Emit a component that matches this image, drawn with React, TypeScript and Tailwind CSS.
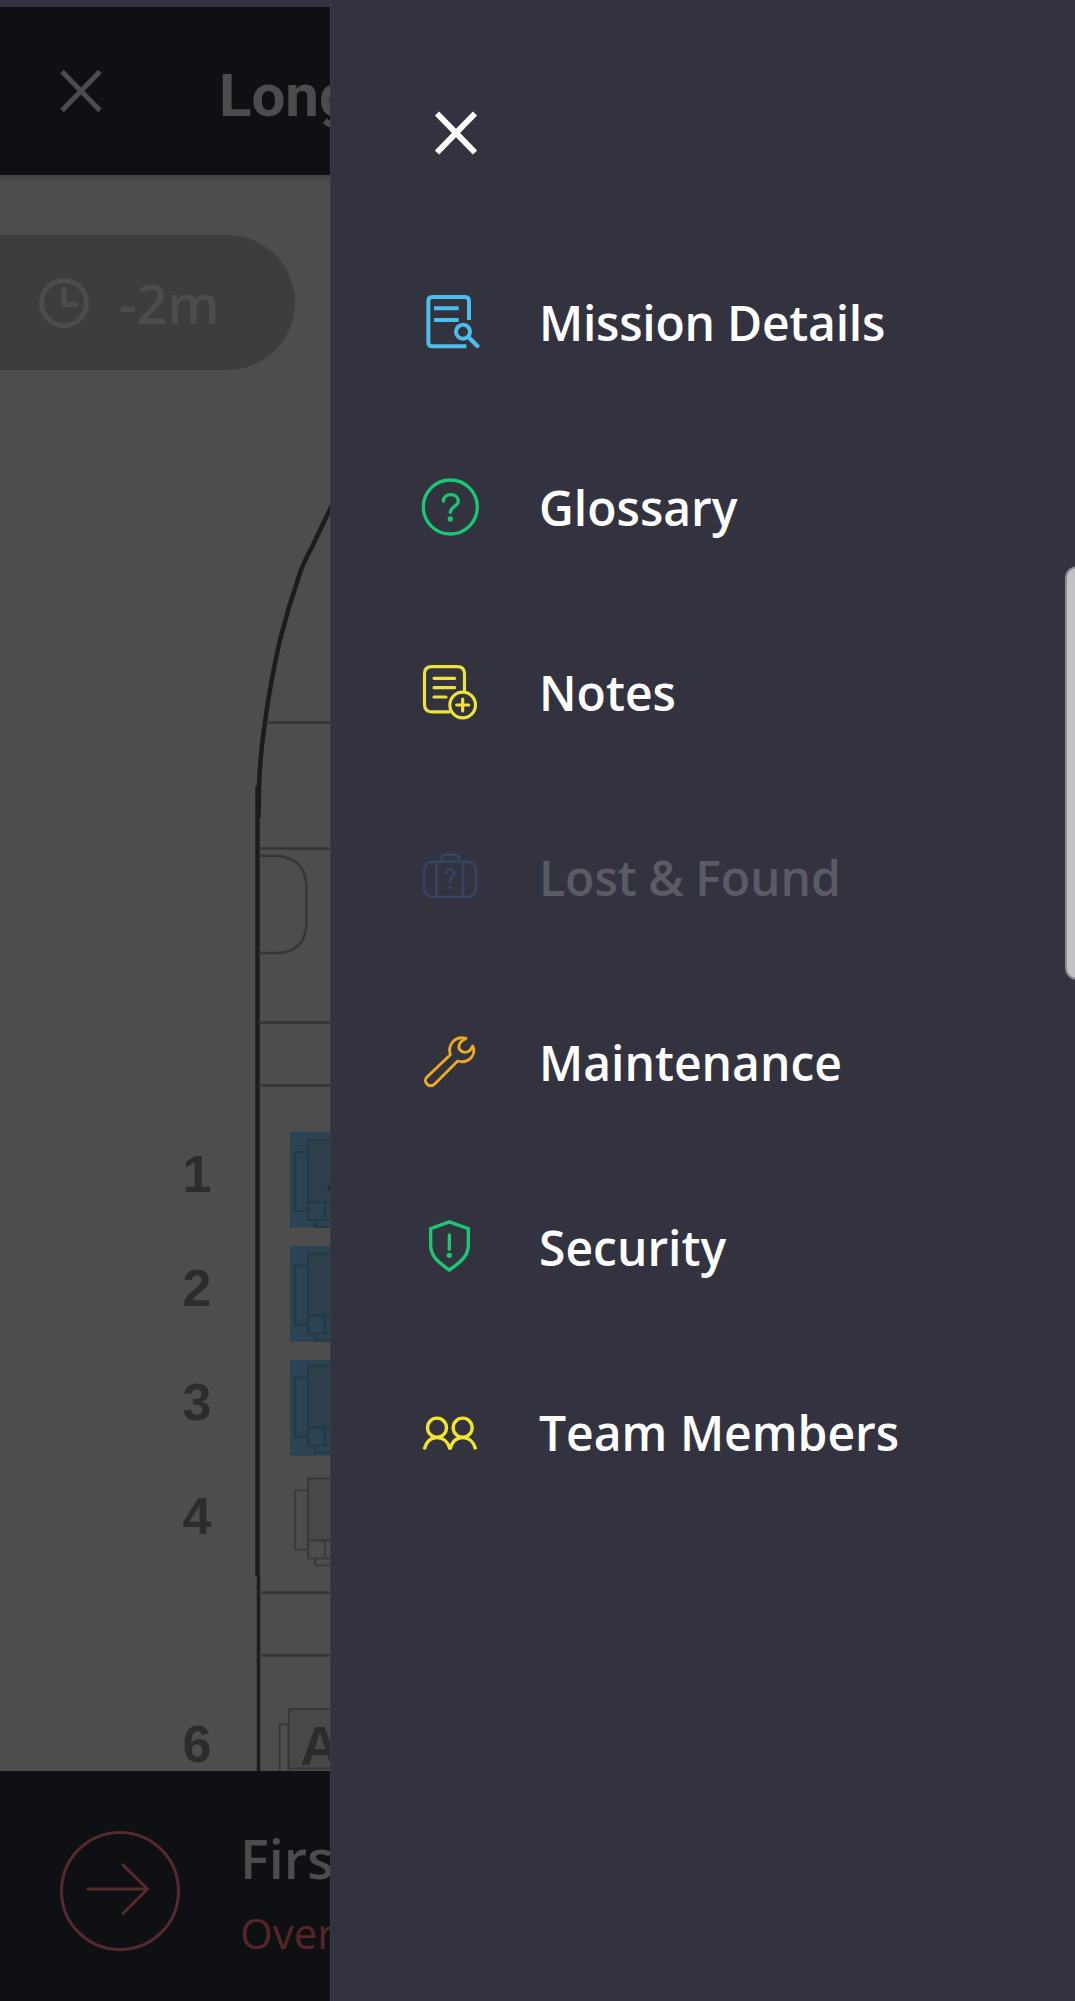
import type { ReactNode } from "react";

type MenuItem = {
  label: string;
  color: string;
  spacing?: string;
  disabled?: boolean;
  icon: ReactNode;
};

const menu: MenuItem[] = [
  {
    label: "Mission Details",
    color: "text-[#4cbdec]",
    spacing: "tracking-[-0.25px]",
    icon: (
      <g strokeWidth="12">
        <path d="M147 84V27q0-12-12-12H37q-12 0-12 12V151q0 12 12 12H139" />
        <path d="M42 49H116M42 84H116" />
        <circle cx="129" cy="119" r="21" />
        <path d="M146 136L172 162" strokeWidth="13" strokeLinecap="round" />
      </g>
    ),
  },
  {
    label: "Glossary",
    color: "text-[#18c974]",
    icon: (
      <g strokeWidth="10" strokeLinecap="round">
        <circle cx="91" cy="90" r="81" />
        <path d="M70 72C71 60 80 53 92 53C105 53 115 61 115 73C115 88 91 88 91 106" />
        <circle cx="91" cy="126" r="8" fill="currentColor" stroke="none" />
      </g>
    ),
  },
  {
    label: "Notes",
    color: "text-[#efe23c]",
    icon: (
      <g strokeWidth="9.5" strokeLinecap="round">
        <path d="M133.500 84V36q0-22-22-22H35.500q-22 0-22 22V127.500q0 22 22 22H88" />
        <path d="M42 49H104M42 77H104M42 105H78" />
        <circle cx="128" cy="129" r="38.500" />
        <path d="M110 129H146M128 111V147" />
      </g>
    ),
  },
  {
    label: "Lost & Found",
    color: "text-[#364463]",
    spacing: "[word-spacing:-1px]",
    disabled: true,
    icon: (
      <g strokeWidth="8" strokeLinecap="round">
        <rect x="12" y="44" width="156" height="106" rx="26" />
        <path d="M49 44V150M129 44V150M65 42V36q0-13 13-13h26q13 0 13 13v6" />
        <path d="M78 78C79 71 84 68 90 68C97 68 102 73 102 79C102 90 90 90 90 105" />
        <circle cx="90" cy="122" r="5" fill="currentColor" stroke="none" />
      </g>
    ),
  },
  {
    label: "Maintenance",
    color: "text-[#f0aa22]",
    icon: (
      <path
        strokeWidth="8.5"
        strokeLinejoin="round"
        d="M91 68C82 40 104 10 138 19C120 27 111 43 120 54C131 67 151 61 158 42C170 66 148 97 113 87L45 155C38 162 29 163 22 157C14 150 14 142 21 135Z"
      />
    ),
  },
  {
    label: "Security",
    color: "text-[#1cc777]",
    icon: (
      <g strokeWidth="10" strokeLinecap="round">
        <path d="M88 14.500L145 35V85C145 115 126 133 88 159C50 133 32 115 32 85V35Z" />
        <path d="M88 54V97" />
        <circle cx="88" cy="115" r="8" fill="currentColor" stroke="none" />
      </g>
    ),
  },
  {
    label: "Team Members",
    color: "text-[#f2e52c]",
    icon: (
      <g strokeWidth="10">
        <circle cx="51" cy="77" r="28.500" />
        <circle cx="128" cy="77" r="28.500" />
        <path
          strokeLinejoin="bevel"
          d="M13 142C19 118 34 107 51 107S84 118 90 142C96 118 111 107 128 107S161 118 167 142"
        />
      </g>
    ),
  },
];

function Cross({ className, width }: { className: string; width: number }) {
  return (
    <svg className={className} viewBox="0 0 44 44" fill="none" stroke="currentColor" strokeWidth={width}>
      <path d="M3 2.500L41 41.500M41 2.500L3 41.500" />
    </svg>
  );
}

/* Seat outline; y is the top of the backrest. */
function Seat({ y, stroke, fill }: { y: number; stroke: string; fill: string }) {
  return (
    <g transform={`translate(0 ${y})`} stroke={stroke} strokeWidth="2.2" fill="none">
      <rect x="295" y="12" width="13" height="59" rx="1" />
      <rect x="308" y="0" width="30" height="62" fill={fill} />
      <rect x="308" y="62" width="30" height="18" rx="2" />
      <path d="M325 62V80M315 80V85q0 2 2 2H332" />
    </g>
  );
}

function SeatMap() {
  const rows: [string, number][] = [
    ["1", 1192],
    ["2", 1306],
    ["3", 1420],
    ["4", 1534],
    ["6", 1761.5],
  ];
  return (
    <svg className="absolute inset-0 h-[1596px] w-[330px]" viewBox="0 175 330 1596" fill="none">
      <path
        d="M334 501L312 547Q303 563 299 576Q288 608 280 640Q270 684 265 722Q260 756 259 786L258.500 818"
        stroke="#1c1c1c"
        strokeWidth="4.500"
      />
      <path d="M257.500 786V1576" stroke="#1c1c1c" strokeWidth="4.500" />
      <path d="M258.500 1576V1771" stroke="#1c1c1c" strokeWidth="3.500" />
      <path
        d="M266 722.500H330M259 848.500H330M259 1022.500H330M259 1085.500H330M259 1592.500H330M259 1655.500H330"
        stroke="#343434"
        strokeWidth="2.500"
      />
      <path d="M259 856H278Q306 858 306.500 888V922Q306 952 278 953H259" stroke="#363636" strokeWidth="2.500" />
      <g fill="#2b4352">
        <rect x="290" y="1132" width="40" height="95.500" />
        <rect x="290" y="1246" width="40" height="95.500" />
        <rect x="290" y="1360" width="40" height="95.500" />
      </g>
      <Seat y={1140} stroke="#253843" fill="#2c3f4b" />
      <Seat y={1253.5} stroke="#253843" fill="#2c3f4b" />
      <Seat y={1365.5} stroke="#253843" fill="#2c3f4b" />
      <Seat y={1478.5} stroke="#3a3a3a" fill="#484848" />
      <g stroke="#383838" strokeWidth="2">
        <rect x="279.500" y="1724.500" width="9" height="60" />
        <rect x="289" y="1709" width="60" height="59.500" fill="#484848" />
      </g>
      <g className="font-['Liberation_Sans',sans-serif] text-[52px] font-bold" fill="#2c2c2c">
        {rows.map(([label, y]) => (
          <text key={label} x="182.500" y={y}>
            {label}
          </text>
        ))}
        <text x="300" y="1764.500" className="text-[55px]">
          A
        </text>
        <text x="325.500" y="1191" fill="#1f2c34">
          A
        </text>
      </g>
    </svg>
  );
}

export default function App() {
  return (
    <div className="relative flex h-[2001px] w-[1075px] overflow-hidden bg-[#33333f] font-['Open_Sans',sans-serif]">
      <main className="flex w-[330px] shrink-0 flex-col overflow-hidden pt-[7px] text-[#4c4c4e]">
        <header className="flex h-[168px] shrink-0 items-start bg-[#0f1014] pl-[59px] whitespace-nowrap">
          <Cross className="mt-[62px] size-11 shrink-0" width={5} />
          <h1 className="mt-[59px] ml-[116px] font-['Roboto',sans-serif] text-[60px] leading-[60px] font-bold">Long Haul</h1>
        </header>
        <section className="relative h-[1596px] shrink-0 bg-[#4d4d4d] pt-[60px]">
          <SeatMap />
          <div className="absolute inset-x-0 top-0 h-2 bg-linear-to-b from-black/15 to-transparent" />
          <div className="relative flex h-[135px] w-[295px] items-center rounded-r-full bg-[#3d3d3d] pl-[39px] text-[#4c4c4c]">
            <svg className="size-[50px]" viewBox="0 0 50 50" fill="none" stroke="currentColor" strokeWidth="5">
              <circle cx="25" cy="25" r="22.500" />
              <path d="M25 9V26.500H39" />
            </svg>
            <span className="ml-[30px] pb-px text-[55px] leading-none font-semibold tracking-[-0.5px]">-2m</span>
          </div>
        </section>
        <footer className="flex h-[230px] shrink-0 bg-[#0f1014] pt-[60px] pl-[60px] whitespace-nowrap">
          <svg className="size-[120px] shrink-0 text-[#542a2d]" viewBox="0 0 120 120" fill="none" stroke="currentColor" strokeWidth="3">
            <circle cx="60" cy="60" r="58.500" />
            <path d="M28 58H87M63 34L87.500 58L63 82.500" strokeLinecap="round" />
          </svg>
          <div className="ml-[60px] flex flex-col">
            <span className="text-[54px] leading-[54px] font-semibold">First Class</span>
            <span className="mt-[27px] text-[42px] leading-[42px] text-[#562629]">Overdue</span>
          </div>
        </footer>
      </main>

      <aside className="flex flex-1 flex-col border-l border-[#373a48] pt-[111px] pl-[89px]">
        <button className="ml-[14px] size-11 text-white">
          <Cross className="size-11" width={6} />
        </button>
        <nav className="mt-[75px]">
          {menu.map((item) => (
            <a key={item.label} className="flex h-[185px] items-center whitespace-nowrap">
              <svg className={`h-[61px] w-[60px] shrink-0 ${item.color}`} viewBox="0 0 180 183" fill="none" stroke="currentColor">
                {item.icon}
              </svg>
              <span
                className={`ml-[59px] text-[48px] leading-none font-semibold ${item.spacing ?? ""} ${
                  item.disabled ? "text-[#5b5b66]" : "text-white"
                }`}
              >
                {item.label}
              </span>
            </a>
          ))}
        </nav>
      </aside>
      <div className="absolute top-[566px] right-[-14px] h-[414px] w-6 rounded-[14px] border-2 border-[#8b8b92] bg-[#c1c1c8]" />
    </div>
  );
}
